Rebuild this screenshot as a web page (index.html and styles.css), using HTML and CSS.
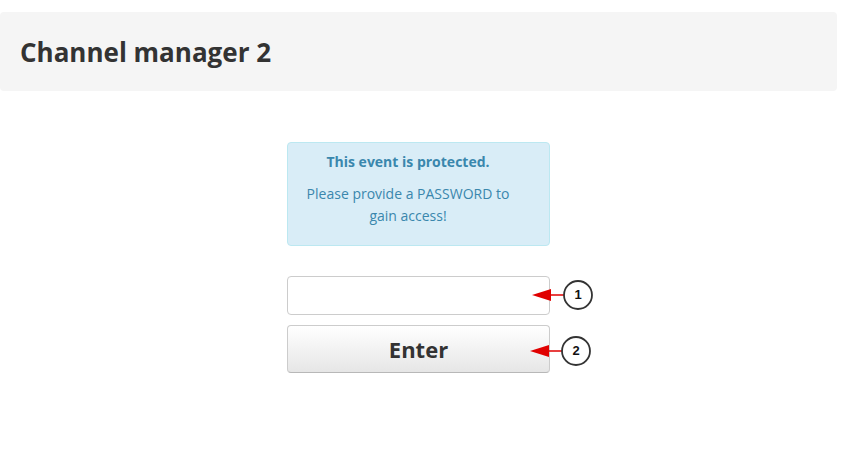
FILE: index.html
```html
<!DOCTYPE html>
<html lang="en">
<head>
  <meta charset="UTF-8" />
  <title>Channel manager 2</title>
  <link rel="stylesheet" href="styles.css">
</head>
<body>

  <div class="page">
    <div class="header">
      <h1>Channel manager 2</h1>
    </div>

    <div class="login">
      <div class="alert">
        <strong>This event is protected.</strong>
        <p>Please provide a PASSWORD to gain access!</p>
      </div>

      <form class="form">
        <input type="password" class="password" />
        <button type="button" class="enter">Enter</button>
      </form>

      <svg class="notes" width="80" height="110" viewBox="0 0 80 110">
        <!-- note 1 -->
        <line x1="16" y1="19" x2="33" y2="19" stroke="#e00000" stroke-width="1.5" />
        <polygon points="0,19 19,13 19,25" fill="#e00000" />
        <circle cx="46" cy="19" r="14" fill="#fff" stroke="#333" stroke-width="1.8" />
        <text x="46" y="23" text-anchor="middle">1</text>
        <!-- note 2 -->
        <line x1="14" y1="75" x2="31" y2="75" stroke="#e00000" stroke-width="1.5" />
        <polygon points="-2,75 17,69 17,81" fill="#e00000" />
        <circle cx="44" cy="75" r="14" fill="#fff" stroke="#333" stroke-width="1.8" />
        <text x="44" y="79" text-anchor="middle">2</text>
      </svg>
    </div>
  </div>

</body>
</html>
```

FILE: styles.css
```css
* {
  margin: 0;
  padding: 0;
  box-sizing: border-box;
}

body {
  font-family: 'Open Sans', sans-serif;
  color: #333;
  background: #fff;
}

.page {
  width: 837px;
  padding-top: 12px;
}

.header {
  background: #f5f5f5;
  border-radius: 4px;
  height: 79px;
  padding: 0 20px;
  display: flex;
  align-items: center;
}

.header h1 {
  font-size: 26px;
  font-weight: 700;
  color: #333;
}

.login {
  position: relative;
  width: 263px;
  margin: 51px auto 0;
}

.alert {
  background: #d9edf7;
  border: 1px solid #bce8f1;
  border-radius: 4px;
  color: #3a87ad;
  font-size: 14px;
  line-height: 22px;
  text-align: center;
  padding: 8px 35px 15px 14px;
  height: 104px;
}

.alert strong {
  display: block;
  margin-bottom: 10px;
}

.form {
  display: flex;
  flex-direction: column;
  gap: 10px;
  margin-top: 30px;
}

.password {
  height: 39px;
  border: 1px solid #ccc;
  border-radius: 4px;
  background: #fff;
  padding: 4px 8px;
  font-size: 14px;
}

.enter {
  height: 48px;
  border: 1px solid #ccc;
  border-bottom-color: #b8b8b8;
  border-radius: 4px;
  background: linear-gradient(#ffffff, #e6e6e6);
  color: #333;
  font-family: 'Open Sans', sans-serif;
  font-size: 22px;
  font-weight: 700;
}

.notes {
  position: absolute;
  left: 245px;
  top: 134px;
  overflow: visible;
}

.notes text {
  font-family: 'Liberation Sans', Arial, sans-serif;
  font-size: 13px;
  font-weight: 700;
  fill: #111;
}
```
